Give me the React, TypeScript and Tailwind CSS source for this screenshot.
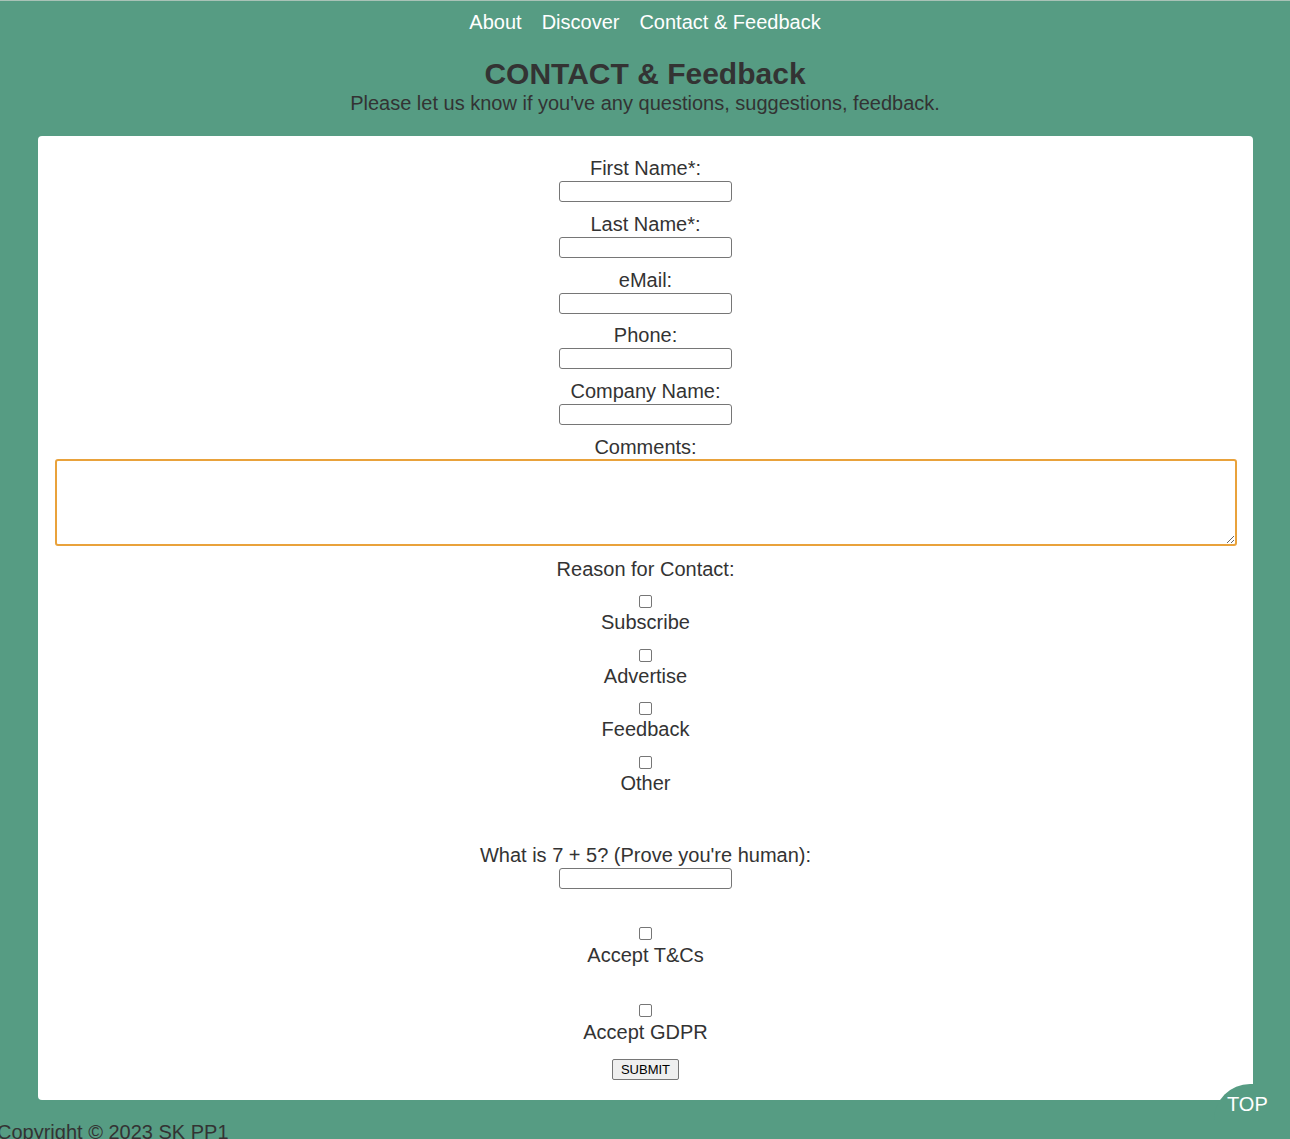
const fields = ['First Name*:', 'Last Name*:', 'eMail:', 'Phone:', 'Company Name:']
const fieldGaps = ['', 'mt-[11px]', 'mt-[11px]', 'mt-[10px]', 'mt-[11px]']
const reasons = ['Subscribe', 'Advertise', 'Feedback', 'Other']
const reasonGaps = ['mt-[14px]', 'mt-[15px]', 'mt-[14px]', 'mt-[15px]']

const Box = () => (
  <span className="block w-[13px] h-[13px] rounded-[2px] border border-[#767676] bg-white" />
)

const TextInput = () => (
  <input
    type="text"
    className="block w-[173px] h-[21px] rounded-[3px] border border-[#767676] bg-white outline-none"
  />
)

export default function App() {
  return (
    <div
      className="relative min-h-[1139px] bg-[#569c83] text-[#333] border-t border-[#a9c2b7] overflow-hidden"
      style={{ fontFamily: '"Liberation Sans", Arial, sans-serif' }}
    >
      <nav className="flex justify-center gap-[20px] pt-[10px] text-[20px] leading-[23px] text-white">
        <a href="#">About</a>
        <a href="#">Discover</a>
        <a href="#">Contact &amp; Feedback</a>
      </nav>

      <header className="text-center">
        <h1 className="mt-[23px] text-[30px] leading-[34px] font-bold">CONTACT &amp; Feedback</h1>
        <p className="mt-[1px] text-[20px] leading-[23px]">
          Please let us know if you've any questions, suggestions, feedback.
        </p>
      </header>

      <main className="ml-[38px] mr-[37px] mt-[21px] rounded-[4px] bg-white pt-[21px] pb-[20px]">
        <form className="flex flex-col items-center text-[20px] leading-[23px]">
          {fields.map((f, i) => (
            <div key={f} className={`flex flex-col items-center ${fieldGaps[i]}`}>
              <label>{f}</label>
              <div className="mt-[1px]">
                <TextInput />
              </div>
            </div>
          ))}

          <label className="mt-[11px]">Comments:</label>
          <div className="self-stretch pl-[17px] pr-[16px]">
            <textarea className="block w-full h-[87px] rounded-[3px] border-2 border-[#e9a23b] outline-none resize-y" />
          </div>

          <p className="mt-[12px]">Reason for Contact:</p>
          {reasons.map((r, i) => (
            <div key={r} className={`flex flex-col items-center ${reasonGaps[i]}`}>
              <Box />
              <span className="mt-[3px]">{r}</span>
            </div>
          ))}

          <label className="mt-[49px]">What is 7 + 5? (Prove you're human):</label>
          <div className="mt-[1px]">
            <TextInput />
          </div>

          <div className="flex flex-col items-center mt-[38px]">
            <Box />
            <span className="mt-[4px]">Accept T&amp;Cs</span>
          </div>
          <div className="flex flex-col items-center mt-[37px]">
            <Box />
            <span className="mt-[4px]">Accept GDPR</span>
          </div>

          <button
            type="button"
            className="mt-[15px] h-[21px] w-[67px] rounded-[2px] border border-[#767676] bg-[#efefef] text-[13px] leading-[15px] text-black"
          >
            SUBMIT
          </button>
        </form>
      </main>

      <footer className="mt-[21px] ml-[-3px] text-[20px] leading-[23px] whitespace-nowrap">
        Copyright © 2023 SK PP1
      </footer>

      <a
        href="#"
        className="absolute left-[1214px] top-[1083px] w-[90px] h-[80px] rounded-tl-[36px] bg-[#569c83] pl-[13px] pt-[9px] text-[20px] leading-[23px] text-white"
      >
        TOP
      </a>
    </div>
  )
}
